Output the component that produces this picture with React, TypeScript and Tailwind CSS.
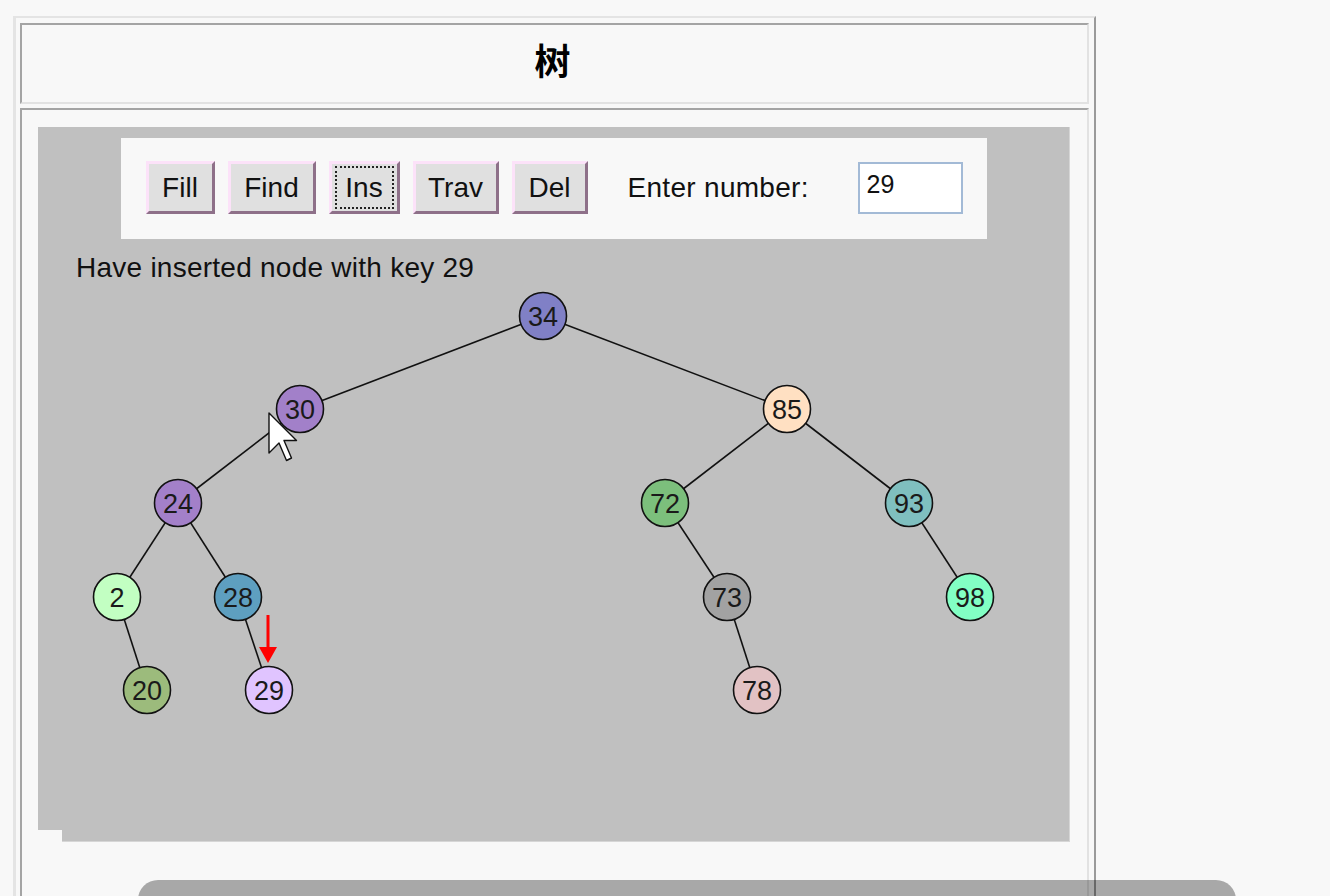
import React from "react";

type TreeNode = {
    key: number;
    x: number;
    y: number;
    color: string;
    parent?: number;
};

// positions are relative to the grey applet area
const nodes: TreeNode[] = [
    { key: 34, x: 505, y: 189, color: "#8080c6" },
    { key: 30, x: 262, y: 282, color: "#a280c9", parent: 34 },
    { key: 85, x: 749, y: 282, color: "#ffe0c2", parent: 34 },
    { key: 24, x: 140, y: 376, color: "#a380c9", parent: 30 },
    { key: 72, x: 627, y: 376, color: "#7cbf7c", parent: 85 },
    { key: 93, x: 871, y: 376, color: "#7fbfbf", parent: 85 },
    { key: 2, x: 79, y: 470, color: "#c2ffc2", parent: 24 },
    { key: 28, x: 200, y: 470, color: "#5e9fc0", parent: 24 },
    { key: 73, x: 689, y: 470, color: "#a2a2a2", parent: 72 },
    { key: 98, x: 932, y: 470, color: "#82ffc4", parent: 93 },
    { key: 20, x: 109, y: 563, color: "#9cbb7c", parent: 2 },
    { key: 29, x: 231, y: 563, color: "#e0c4ff", parent: 28 },
    { key: 78, x: 719, y: 563, color: "#e2c2c4", parent: 73 },
];

const buttons = [
    { label: "Fill", w: "w-[69px]" },
    { label: "Find", w: "w-[88px]" },
    { label: "Ins", w: "w-[71px]", focused: true },
    { label: "Trav", w: "w-[86px]" },
    { label: "Del", w: "w-[76px]" },
];

function TreeCanvas() {
    const byKey = new Map(nodes.map((n) => [n.key, n]));
    return (
        <svg
            className="absolute inset-0 pointer-events-none"
            width={1032}
            height={703}
            viewBox="0 0 1032 703"
        >
            {nodes.map((n) => {
                if (n.parent === undefined) return null;
                const p = byKey.get(n.parent)!;
                return (
                    <line
                        key={"l" + n.key}
                        x1={p.x}
                        y1={p.y}
                        x2={n.x}
                        y2={n.y}
                        stroke="#111"
                        strokeWidth={1.6}
                    />
                );
            })}
            {nodes.map((n) => (
                <g key={n.key}>
                    <circle cx={n.x} cy={n.y} r={23.5} fill={n.color} stroke="#111" strokeWidth={1.6} />
                    <text
                        x={n.x}
                        y={n.y + 1}
                        textAnchor="middle"
                        dominantBaseline="central"
                        fontSize={27}
                        fontFamily="'Liberation Sans', Arial, sans-serif"
                        fill="#1a1a1a"
                    >
                        {n.key}
                    </text>
                </g>
            ))}
            {/* red insert arrow */}
            <line x1={230} y1={488} x2={230} y2={524} stroke="#ff0000" strokeWidth={3} />
            <polygon points="221,520 239,520 230,536" fill="#ff0000" />
            {/* mouse pointer */}
            <path
                d="M231 286 V326 L241 316 L248.5 333.5 L253.5 331 L246 313.5 H258.5 Z"
                fill="#fff"
                stroke="#111"
                strokeWidth={1.4}
                strokeLinejoin="round"
            />
        </svg>
    );
}

export default function App() {
    return (
        <div className="relative h-[896px] overflow-hidden bg-[#f8f8f8] font-['Liberation_Sans',Arial,sans-serif] text-[#111]">
            <div className="ml-[13px] mt-[16px] w-[1083px] border-l-[3px] border-t-2 border-[#e4e4e4] border-r-2 border-r-[#9a9a9a] pl-[4px] pr-[5px] pt-[5px]">
                <div className="flex h-[81px] items-center justify-center border-2 border-t-[#a4a4a4] border-l-[#a4a4a4] border-b-[#e2e2e2] border-r-[#e2e2e2]">
                    <span className="mb-[10px] mr-[4px] font-['Noto_Sans_CJK_SC',sans-serif] text-[36px] font-bold leading-none text-black">树</span>
                </div>

                <div className="mt-[4px] h-[800px] border-2 border-t-[#a4a4a4] border-l-[#a4a4a4] border-b-[#e2e2e2] border-r-[#e2e2e2] pl-[16px] pt-[17px]">
                    <div className="relative h-[703px] w-[1032px] bg-[#c0c0c0] border-r border-[#d6d6d6] pt-[11px]">
                        <div className="mx-auto flex h-[101px] w-[866px] items-start bg-[#f8f8f8] pl-[25px] pt-[23px]">
                            {buttons.map((b) => (
                                <div
                                    key={b.label}
                                    className={`${b.w} mr-[13px] flex h-[53px] items-center justify-center border-[3px] border-t-[#fce2f9] border-l-[#fce2f9] border-b-[#8e7089] border-r-[#8e7089] bg-[#e0e0e0] text-[28px] leading-none`}
                                >
                                    {b.focused ? (
                                        <span className="flex h-[43px] w-[59px] items-center justify-center border-2 border-dotted border-[#222]">
                                            {b.label}
                                        </span>
                                    ) : (
                                        b.label
                                    )}
                                </div>
                            ))}
                            <div className="ml-[27px] flex h-[53px] w-[230px] items-center text-[28px] tracking-[0.3px]">Enter number:</div>
                            <div className="mt-[1px] h-[52px] w-[105px] border-2 border-[#a3bad6] bg-white pl-[7px] pt-[6px] text-[25px] leading-[28px]">
                                29
                            </div>
                        </div>
                        <p className="ml-[38px] mt-[13px] text-[28px] leading-[32px] tracking-[0.25px]">Have inserted node with key 29</p>
                        <TreeCanvas />
                    </div>
                    <div className="ml-[24px] h-[12px] w-[1008px] bg-[#c0c0c0] border-r border-b border-[#d6d6d6]" />
                </div>
            </div>

            <div className="absolute left-[138px] top-[880px] h-[40px] w-[1098px] rounded-[20px] bg-[rgba(0,0,0,0.32)]" />
        </div>
    );
}
